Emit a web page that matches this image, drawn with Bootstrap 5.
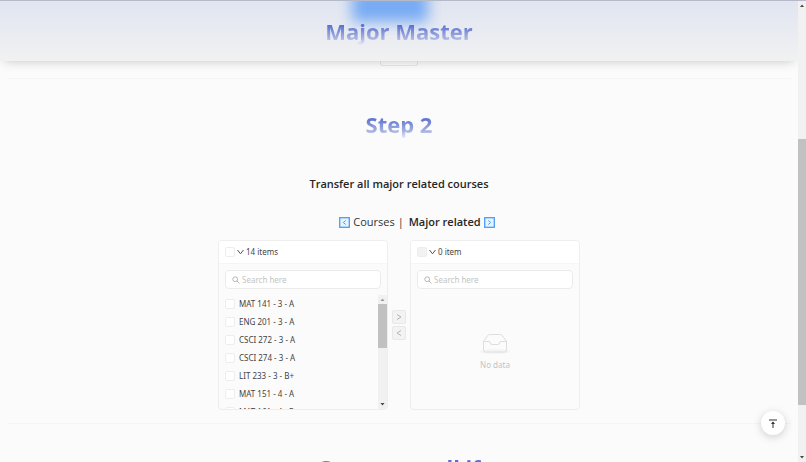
<!DOCTYPE html>
<html lang="en">
<head>
<meta charset="utf-8">
<meta name="viewport" content="width=device-width, initial-scale=1">
<title>Major Master</title>
<link href="https://cdn.jsdelivr.net/npm/bootstrap@5.3.0/dist/css/bootstrap.min.css" rel="stylesheet">
<style>
body{font-family:"Open Sans","Noto Sans",sans-serif;font-size:8px;line-height:12px;color:#444;background:#fbfbfb}
.app-window{height:100vh;overflow:hidden;border-top:1px solid #b4bac8}
.page-area{min-width:0;overflow:hidden}
.top-bar{height:60px;padding-top:13px;overflow:hidden;background:linear-gradient(#e0e5f1,#f1f1f1)}
.bar-shadow{box-shadow:0 4px 10px -4px rgba(0,0,0,.22);z-index:2}
.glow{width:76px;height:32px;top:-11px;left:calc(50% - 47px);background:#78abf4;filter:blur(7px)}
.big-title{font-size:22px;line-height:34px;font-weight:700;margin:0}
.big-title span{display:inline-block;background:linear-gradient(#4a63cc 25%,#a9b4e2 72%,#eeeef8 92%);-webkit-background-clip:text;background-clip:text;color:transparent}
.peek-btn{width:38px;height:5px;border:1px solid #e8e8e8;border-top:0;border-radius:0 0 3px 3px}
.rule{border-top:1px solid #f5f5f5;margin:12px 7px 0}
.step-block{padding-top:28px}
.sub-title{font-size:11px;line-height:16px;font-weight:600;color:#262626;margin:35px 0 0}
.pick-line{font-size:11px;line-height:16px;color:#333;padding-left:36px;margin-top:22px;gap:3px}
.pick-line strong{font-weight:600;color:#262626;padding-left:2px}
.transfer{gap:4px;margin-top:10px}
.panel{width:170px;height:170px;border:1px solid #eee;border-radius:4px;overflow:hidden}
.panel-head{height:23px;flex:none;background:#fff;border-bottom:1px solid #f5f5f5;padding:0 6px}
.chevron{margin:0 2px}
.text-noto{font-family:"Noto Sans","Open Sans",sans-serif}
.box{appearance:none;width:10px;height:10px;margin:0;border:1px solid #ededed;border-radius:2px;background:#fff;flex:none}
.box:disabled{background:#f2f2f2}
.search{height:19px;flex:none;margin:6px;border:1px solid #ebebeb;border-radius:4px;background:#fff;padding:0 6px;gap:2px}
.search input{font-size:8px;line-height:12px;color:#444;outline:0;min-width:0}
.search input::placeholder{color:#c4c4c4;opacity:1}
.list-area{min-height:0}
.items{overflow:hidden;min-width:0;padding-left:6px}
.items label{height:18px;gap:4px;flex:none}
.moves{gap:2px}
.move-btn{width:14px;height:14px;border:1px solid #e8e8e8;border-radius:2px;background:#f3f3f3}
.scroller{background:#f1f1f1}
.thumb{background:#c1c1c1}
.page-scroll{width:8px}
.page-scroll .thumb{height:266px;margin-top:131px}
.list-scroll{width:9px}
.list-scroll .thumb{height:44px;margin-top:1px}
.no-data{color:#c4c4c4}
.to-top{width:24px;height:24px;right:13px;bottom:27px;background:#fff;box-shadow:0 2px 8px rgba(0,0,0,.18);z-index:3}
.last-rule{margin-top:13px}
.last-title{padding-top:26px}
svg{display:block;flex:none}
</style>
<script src="https://cdn.jsdelivr.net/npm/bootstrap@5.3.0/dist/js/bootstrap.bundle.min.js"></script>
</head>
<body>
<div class="app-window d-flex">
<div class="page-area flex-fill position-relative">
  <header class="bar-shadow position-relative">
    <div class="top-bar position-relative text-center">
      <div class="glow position-absolute"></div>
      <h1 class="big-title position-relative"><span>Major Master</span></h1>
    </div>
  </header>
  <main>
    <div class="peek-btn mx-auto"></div>
    <div class="rule"></div>
    <section class="step-block text-center">
      <h2 class="big-title"><span>Step 2</span></h2>
      <h3 class="sub-title">Transfer all major related courses</h3>
      <div class="pick-line d-flex justify-content-center align-items-center">
        <svg width="11" height="11" viewBox="0 0 11 11" fill="#e6f4ff" stroke="#4b9df5"><rect x=".7" y=".7" width="9.6" height="9.6" stroke-width="1.3"/><path d="M6.7 3.5 4.3 5.5l2.4 2" fill="none"/></svg>
        <span>Courses |</span><strong>Major related</strong>
        <svg width="11" height="11" viewBox="0 0 11 11" fill="#e6f4ff" stroke="#4b9df5"><rect x=".7" y=".7" width="9.6" height="9.6" stroke-width="1.3"/><path d="m4.3 3.5 2.4 2-2.4 2" fill="none"/></svg>
      </div>
    </section>
    <section class="transfer text-noto d-flex justify-content-center align-items-center">
      <div class="panel d-flex flex-column">
        <div class="panel-head d-flex align-items-center">
          <input class="box" type="checkbox" id="all-left" aria-label="Select all courses">
          <svg class="chevron" width="7" height="6" viewBox="0 0 7 6" fill="none" stroke="#555"><path d="M.5 1 3.500 4.800 6.500 1"/></svg>
          <label for="all-left">14 items</label>
        </div>
        <div class="search d-flex align-items-center">
          <svg width="8" height="8" viewBox="0 0 8 8" fill="none" stroke="#b5b5b5"><circle cx="3.2" cy="3.2" r="2.4"/><path d="m5 5 2.5 2.5"/></svg>
          <input class="border-0 p-0 bg-transparent flex-fill" type="text" placeholder="Search here" aria-label="Search courses">
        </div>
        <div class="list-area d-flex flex-fill">
          <div class="items d-flex flex-column flex-fill">
            <label class="d-flex align-items-center"><input class="box" type="checkbox">MAT 141 - 3 - A</label>
            <label class="d-flex align-items-center"><input class="box" type="checkbox">ENG 201 - 3 - A</label>
            <label class="d-flex align-items-center"><input class="box" type="checkbox">CSCI 272 - 3 - A</label>
            <label class="d-flex align-items-center"><input class="box" type="checkbox">CSCI 274 - 3 - A</label>
            <label class="d-flex align-items-center"><input class="box" type="checkbox">LIT 233 - 3 - B+</label>
            <label class="d-flex align-items-center"><input class="box" type="checkbox">MAT 151 - 4 - A</label>
            <label class="d-flex align-items-center"><input class="box" type="checkbox">MAT 161 - 4 - B</label>
          </div>
          <div class="list-scroll scroller d-flex flex-column">
            <svg width="9" height="8" viewBox="0 0 9 8" fill="#999"><path d="m2.5 6 2-2.5 2 2.5z"/></svg>
            <div class="thumb"></div>
            <svg class="mt-auto" width="9" height="8" viewBox="0 0 9 8" fill="#444"><path d="m2.5 2 2 2.5 2-2.5z"/></svg>
          </div>
        </div>
      </div>
      <div class="moves d-flex flex-column">
        <button class="move-btn p-0 d-flex align-items-center justify-content-center" type="button" aria-label="Move right" disabled><svg width="6" height="8" viewBox="0 0 6 8" fill="none" stroke="#b5b5b5"><path d="m1 1.5 4 2.5-4 2.5"/></svg></button>
        <button class="move-btn p-0 d-flex align-items-center justify-content-center" type="button" aria-label="Move left" disabled><svg width="6" height="8" viewBox="0 0 6 8" fill="none" stroke="#b5b5b5"><path d="M5 1.5 1 4l4 2.5"/></svg></button>
      </div>
      <div class="panel d-flex flex-column">
        <div class="panel-head d-flex align-items-center">
          <input class="box" type="checkbox" id="all-right" disabled aria-label="Select all major related">
          <svg class="chevron" width="7" height="6" viewBox="0 0 7 6" fill="none" stroke="#555"><path d="M.5 1 3.500 4.800 6.500 1"/></svg>
          <label for="all-right">0 item</label>
        </div>
        <div class="search d-flex align-items-center">
          <svg width="8" height="8" viewBox="0 0 8 8" fill="none" stroke="#b5b5b5"><circle cx="3.2" cy="3.2" r="2.4"/><path d="m5 5 2.5 2.5"/></svg>
          <input class="border-0 p-0 bg-transparent flex-fill" type="text" placeholder="Search here" aria-label="Search major related">
        </div>
        <div class="no-data flex-fill d-flex flex-column align-items-center justify-content-center">
          <svg width="30" height="26" viewBox="0 0 30 26" fill="none" stroke="#dedede"><ellipse cx="15" cy="18.5" rx="15" ry="2.5" fill="#f4f4f4" stroke="none"/><path d="M3.5 8.5 8 2.2Q8.500 1.500 9.500 1.500h11q1 0 1.500.7l4.500 6.300V17q0 2-2 2h-19q-2 0-2-2zM3.500 8.500h5.500q1.500 0 1.500 1.500 0 1.500 1.500 1.500h6q1.500 0 1.500-1.500 0-1.500 1.500-1.500h5.500"/></svg>
          <span>No data</span>
        </div>
      </div>
    </section>
    <div class="rule last-rule"></div>
    <section class="last-title text-center"><h2 class="big-title"><span>Course recall if</span></h2></section>
  </main>
  <button class="to-top position-absolute border-0 rounded-circle p-0 d-flex align-items-center justify-content-center" type="button" aria-label="Back to top"><svg width="8" height="9" viewBox="0 0 8 9" fill="none" stroke="#333"><path d="M0 1h8M4 9V3"/><path d="M2 5 4 2.500 6 5z" fill="#333" stroke="none"/></svg></button>
</div>
<div class="page-scroll scroller d-flex flex-column">
  <svg width="8" height="7" viewBox="0 0 8 7" fill="#444"><path d="m2 6 2-2.500 2 2.500z"/></svg>
  <div class="thumb"></div>
  <svg class="mt-auto" width="8" height="8" viewBox="0 0 8 8" fill="#444"><path d="m2 2 2 2.500L6 2z"/></svg>
</div>
</div>
</body>
</html>
